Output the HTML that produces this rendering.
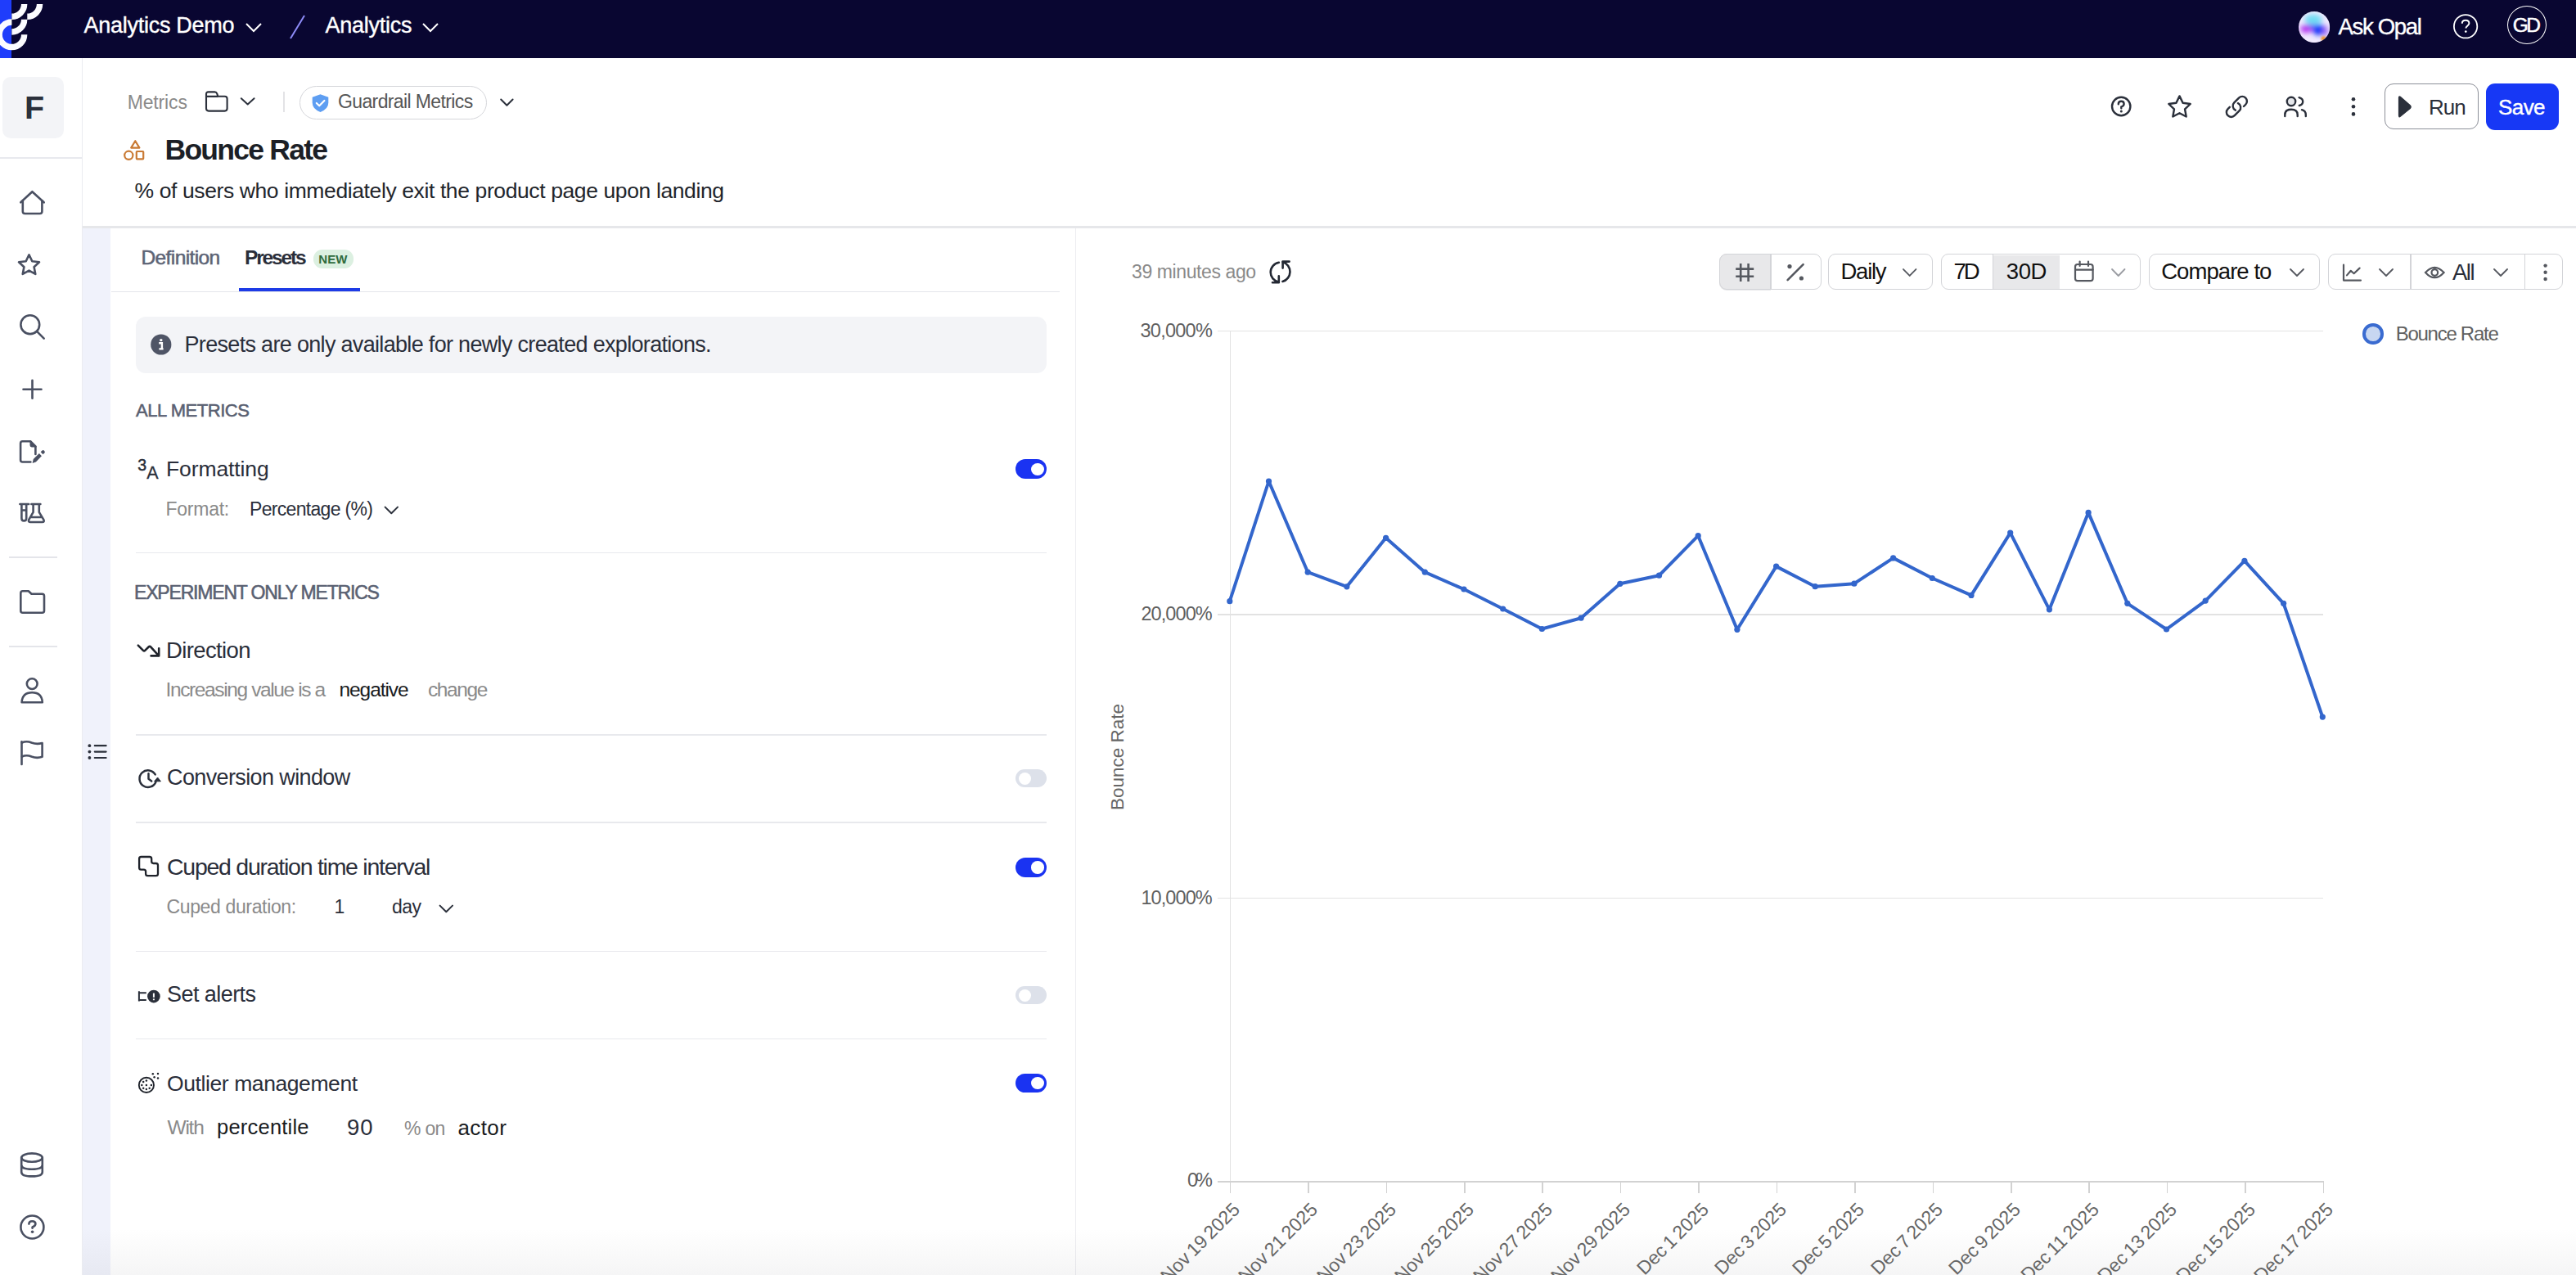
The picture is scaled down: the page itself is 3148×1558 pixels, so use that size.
<!DOCTYPE html>
<html><head><meta charset="utf-8"><style>
html,body{margin:0;padding:0;background:#fff;}
body{width:3148px;height:1558px;position:relative;overflow:hidden;font-family:"Liberation Sans",sans-serif;}
.a{position:absolute;}
.t{position:absolute;line-height:1;white-space:nowrap;}
svg{overflow:visible;}
</style></head><body>
<div class="a" style="left:0.0px;top:0.0px;width:3148.0px;height:71.0px;background:#090631;"></div>
<div class="a" style="left:0.0px;top:0.0px;width:14.4px;height:71.0px;background:#1f3dfb;"></div>
<svg class="a" style="left:0.0px;top:0.0px;clip-path:inset(0 0 0 0);" width="60" height="71" viewBox="0 0 60 71"><g fill="none" stroke="#fbfbff" stroke-width="7.4">
<path d="M14.4 27.05 A15.25 15.25 0 1 0 29.65 42.3"/>
<path d="M14.4 38.95 A15.25 15.25 0 0 0 29.65 23.7"/>
<path d="M14.4 20.25 A15.25 15.25 0 0 0 29.65 5"/>
<path d="M33.3 20.25 A15.25 15.25 0 0 0 48.55 5"/>
</g></svg>
<div class="t" style="left:102.5px;top:17.9px;font-size:27.0px;color:#ffffff;font-weight:400;letter-spacing:-0.27px;-webkit-text-stroke:0.4px #fff;">Analytics Demo</div>
<svg class="a" style="left:300.0px;top:28.0px;" width="20" height="11" viewBox="0 0 20 11"><path d="M1 1 L10 10 L19 1" fill="none" stroke="#fff" stroke-width="2"/></svg>
<svg class="a" style="left:354.0px;top:18.0px;" width="19" height="30" viewBox="0 0 19 30"><path d="M18 1 L1 29" fill="none" stroke="#8e8cf8" stroke-width="2"/></svg>
<div class="t" style="left:397.5px;top:17.9px;font-size:27.0px;color:#ffffff;font-weight:400;letter-spacing:-0.25px;-webkit-text-stroke:0.4px #fff;">Analytics</div>
<svg class="a" style="left:516.0px;top:28.0px;" width="20" height="11" viewBox="0 0 20 11"><path d="M1 1 L10 10 L19 1" fill="none" stroke="#fff" stroke-width="2"/></svg>
<svg class="a" style="left:2808.8px;top:13.9px" width="38.2" height="38.2" viewBox="0 0 38.2 38.2"><defs><clipPath id="orbc"><circle cx="19.1" cy="19.1" r="19.1"/></clipPath><filter id="orbb" x="-50%" y="-50%" width="200%" height="200%"><feGaussianBlur stdDeviation="3.2"/></filter><filter id="orbs" x="-100%" y="-100%" width="300%" height="300%"><feGaussianBlur stdDeviation="1.3"/></filter></defs><g clip-path="url(#orbc)"><rect width="38.2" height="38.2" fill="#f1eaff"/><g filter="url(#orbb)"><ellipse cx="18" cy="10" rx="11" ry="6.5" fill="#6fdcf3"/><ellipse cx="14" cy="20" rx="12" ry="4" fill="#7a5cf5"/><ellipse cx="9" cy="21.5" rx="6.5" ry="5" fill="#b52ff0"/><ellipse cx="25" cy="22.5" rx="8.5" ry="6.5" fill="#1238fa"/><ellipse cx="33" cy="24" rx="3" ry="7" fill="#a46cf6"/></g><circle cx="30.5" cy="33.2" r="3" fill="#ee962f" filter="url(#orbs)"/></g></svg>
<div class="t" style="left:2857.4px;top:19.3px;font-size:27.5px;color:#ffffff;font-weight:400;letter-spacing:-1.29px;-webkit-text-stroke:0.4px #fff;">Ask Opal</div>
<svg class="a" style="left:2997.8px;top:17.4px;" width="30.2" height="30.5" viewBox="0 0 30.2 30.5"><circle cx="15.1" cy="15.25" r="14.2" fill="none" stroke="#fff" stroke-width="1.8"/><path d="M10.8 11.8 C10.8 9 12.8 7.8 15.1 7.8 C17.5 7.8 19.4 9.2 19.4 11.6 C19.4 14.4 15.4 14.6 15.4 17.6" fill="none" stroke="#fff" stroke-width="2"/><circle cx="15.3" cy="21.6" r="1.3" fill="#fff"/></svg>
<div class="a" style="left:3063.8px;top:6.7px;width:46.5px;height:45.5px;border:1.5px solid #fff;border-radius:50%;"></div>
<div class="t" style="left:3070.8px;top:18.6px;font-size:24.5px;color:#ffffff;font-weight:400;letter-spacing:-2.50px;-webkit-text-stroke:0.55px currentColor;">GD</div>
<div class="a" style="left:99.5px;top:71.0px;width:1.5px;height:1487.0px;background:#ebecf0;"></div>
<div class="a" style="left:3.0px;top:94.0px;width:75.0px;height:75.0px;background:#f3f4f7;border-radius:10px;"></div>
<div class="t" style="left:30.0px;top:112.2px;font-size:39.5px;color:#2b303b;font-weight:700;letter-spacing:-2.40px;">F</div>
<div class="a" style="left:0.0px;top:192.0px;width:99.5px;height:2.0px;background:#e8e9ee;"></div>
<svg class="a" style="left:0;top:0" width="100" height="1558"><g fill="none" stroke="#4a5062" stroke-width="2.6" stroke-linecap="round" stroke-linejoin="round">
<path d="M25.3 247.3 L39.4 234.2 L53.7 247.3"/>
<path d="M27.8 245.5 V258.2 Q27.8 261 30.6 261 H48.6 Q51.4 261 51.4 258.2 V245.5"/>
<path d="M35.5 311.3 L39.3 319.2 L48 320.3 L41.6 326.2 L43.3 334.9 L35.5 330.6 L27.7 334.9 L29.4 326.2 L23 320.3 L31.7 319.2 Z"/>
<circle cx="36.8" cy="396.7" r="11.4"/><path d="M45.3 405.2 L53.7 413.6"/>
<path d="M39.5 464.8 V486.8 M28.5 475.8 H50.5"/>
<path d="M37.4 564.5 H27.5 Q25.1 564.5 25.1 562 V541.8 Q25.1 539.3 27.5 539.3 H37 L43.4 545.6 V555"/>
<path d="M24.4 616 H35.2 M26.4 616.2 V633.2 Q26.4 636.4 29.3 636.4 Q32.2 636.4 32.2 633.2 V616.2 M26.6 623.5 H32"/>
<path d="M38.4 616 H49.4 M40.6 616.2 V625.8 L35.2 635.2 Q34.2 638 37.2 638 H51.6 Q54.6 638 53.4 635.2 L47.8 625.8 V616.2 M37.4 632 H50.8"/>
<path d="M25.3 724.8 Q25.3 722.3 27.8 722.3 H34.8 L38.5 725.8 H51.5 Q54 725.8 54 728.3 V746.2 Q54 748.7 51.5 748.7 H27.8 Q25.3 748.7 25.3 746.2 Z"/>
<circle cx="39.2" cy="835.6" r="6.4"/><path d="M26.6 858.2 Q27.2 846.3 39.2 846.3 Q51.2 846.3 51.8 858.2 Z"/>
<path d="M26.5 906.2 V934"/><path d="M26.8 907.5 Q32.5 905 38.5 907.5 Q45 910 51.6 908 V924.8 Q45 927 38.5 924.5 Q32.5 922 26.8 924.5"/>
<ellipse cx="39" cy="1414.6" rx="12.8" ry="5.2"/><path d="M26.2 1414.6 V1432.2 Q26.2 1437.4 39 1437.4 Q51.8 1437.4 51.8 1432.2 V1414.6 M26.2 1423.6 Q26.2 1428.8 39 1428.8 Q51.8 1428.8 51.8 1423.6"/>
<circle cx="39.4" cy="1499.5" r="14"/><path d="M35.4 1495.6 Q35.4 1492.2 39.4 1492.2 Q43.4 1492.2 43.4 1495.4 Q43.4 1497.8 39.6 1499.4 V1500.8"/>
</g></svg>
<svg class="a" style="left:0;top:0" width="100" height="1558"><g fill="#4a5062"><path d="M36.5 538.4 H38 L44.6 545 V546.4 H38.8 Q36.5 546.4 36.5 544 Z"/><path d="M39.6 566 L40.8 561 L47.9 554.1 L50.9 557.2 L43.9 564.4 Z"/><path d="M49.6 552.3 L51.6 550.4 Q52.6 549.4 53.8 550.6 L54.4 551.2 Q55.4 552.4 54.4 553.4 L52.5 555.3 Z"/><circle cx="39.6" cy="1505.2" r="1.8"/></g></svg>
<div class="a" style="left:11.0px;top:680.0px;width:59.0px;height:2.0px;background:#e4e5ea;"></div>
<div class="a" style="left:11.0px;top:789.0px;width:59.0px;height:2.0px;background:#e4e5ea;"></div>
<div class="t" style="left:155.7px;top:114.3px;font-size:23.0px;color:#8a8a8a;font-weight:400;letter-spacing:-0.15px;">Metrics</div>
<svg class="a" style="left:249.0px;top:110.0px;" width="32" height="28" viewBox="0 0 32 28"><path d="M3 22.6 V5 Q3 2.4 5.6 2.4 H13.4 Q15.4 2.4 16.2 4.4 L17.4 7.8 H25.6 Q28.6 7.8 28.6 10.8 V22.6 Q28.6 25.6 25.6 25.6 H6 Q3 25.6 3 22.6 Z M3 7.9 H17.4" fill="none" stroke="#2b303b" stroke-width="2.1" stroke-linejoin="round"/></svg>
<svg class="a" style="left:294.0px;top:118.0px;" width="18" height="12" viewBox="0 0 18 12"><path d="M0.8 2.2 L8.7 9.4 L16.6 2.2" fill="none" stroke="#2b303b" stroke-width="2" stroke-linecap="round" stroke-linejoin="round"/></svg>
<div class="a" style="left:346.3px;top:112.0px;width:1.5px;height:25.0px;background:#e3e3e6;"></div>
<div class="a" style="left:366px;top:104.5px;width:226.5px;height:39px;border:1.5px solid #d5d6da;border-radius:21px;"></div>
<svg class="a" style="left:380.0px;top:114.0px;" width="24" height="24" viewBox="0 0 24 24"><path d="M11.5 1.3 L21.3 4.8 V11.6 Q21.3 19.3 11.5 23 Q1.7 19.3 1.7 11.6 V4.8 Z" fill="#5e9ef2"/><path d="M6.8 12 L10.2 15.3 L16.4 9" fill="none" stroke="#fff" stroke-width="2.2" stroke-linecap="round" stroke-linejoin="round"/></svg>
<div class="t" style="left:413.0px;top:113.1px;font-size:23.0px;color:#565656;font-weight:400;letter-spacing:-0.62px;">Guardrail Metrics</div>
<svg class="a" style="left:611.0px;top:120.0px;" width="18" height="12" viewBox="0 0 18 12"><path d="M1.2 1.5 L8.4 8.8 L15.6 1.5" fill="none" stroke="#2b303b" stroke-width="2" stroke-linecap="round" stroke-linejoin="round"/></svg>
<svg class="a" style="left:150.0px;top:170.0px;" width="28" height="28" viewBox="0 0 28 28"><g fill="none" stroke="#c97a34" stroke-width="2.2" stroke-linejoin="round"><path d="M15.3 2.2 L20.4 10.6 H10.2 Z"/><circle cx="7.3" cy="19.8" r="5.1"/><rect x="16.8" y="15" width="8.4" height="9.4" rx="0.8"/></g></svg>
<div class="t" style="left:201.5px;top:165.7px;font-size:35.5px;color:#1c1f26;font-weight:700;letter-spacing:-1.75px;">Bounce Rate</div>
<div class="t" style="left:164.5px;top:220.2px;font-size:26.5px;color:#22252b;font-weight:400;letter-spacing:-0.39px;">% of users who immediately exit the product page upon landing</div>
<svg class="a" style="left:2578.0px;top:116.0px;" width="28" height="28" viewBox="0 0 28 28"><g fill="none" stroke="#2b303b" stroke-width="2.4" stroke-linecap="round"><circle cx="14.2" cy="14" r="11.2"/><path d="M10.8 11.2 Q10.8 7.8 14.2 7.8 Q17.6 7.8 17.6 10.9 Q17.6 13.2 14.3 14.6 V16.2"/></g><circle cx="14.3" cy="20" r="1.5" fill="#2b303b"/></svg>
<svg class="a" style="left:2647.0px;top:114.0px;" width="32" height="32" viewBox="0 0 32 32"><path d="M16.50 3.40 L20.56 11.72 L29.72 13.00 L23.06 19.43 L24.67 28.55 L16.50 24.20 L8.33 28.55 L9.94 19.43 L3.28 13.00 L12.44 11.72 Z" fill="none" stroke="#2b303b" stroke-width="2.4" stroke-linejoin="round"/></svg>
<svg class="a" style="left:2718.2px;top:114.5px;" width="30.8" height="30.8" viewBox="0 0 24 24"><path d="M13.19 8.688a4.5 4.5 0 0 1 1.242 7.244l-4.5 4.5a4.5 4.5 0 0 1-6.364-6.364l1.757-1.757m13.35-.622 1.757-1.757a4.5 4.5 0 0 0-6.364-6.364l-4.5 4.5a4.5 4.5 0 0 0 1.242 7.244" fill="none" stroke="#2b303b" stroke-width="1.9" stroke-linecap="round" stroke-linejoin="round"/></svg>
<svg class="a" style="left:2789.0px;top:116.0px;" width="32" height="30" viewBox="0 0 32 30"><g fill="none" stroke="#2b303b" stroke-width="2.4" stroke-linecap="round" stroke-linejoin="round"><circle cx="11" cy="8" r="5.2" fill="#e4e6ea"/><path d="M3.3 26 V24.2 Q3.3 17.8 11 17.8 Q18.7 17.8 18.7 24.2 V26"/><path d="M20.6 3.2 Q25.2 4.6 25.2 8.2 Q25.2 11.8 20.8 13"/><path d="M24 18.2 Q28.8 19.4 28.8 24.4 V26"/></g></svg>
<svg class="a" style="left:2870px;top:116px" width="12" height="30"><g fill="#2b303b"><circle cx="6" cy="5.2" r="2.3"/><circle cx="6" cy="14.3" r="2.3"/><circle cx="6" cy="23.4" r="2.3"/></g></svg>
<div class="a" style="left:2914.4px;top:102px;width:112.6px;height:54px;border:1.5px solid #8d9099;border-radius:11px;"></div>
<svg class="a" style="left:2929.0px;top:115.0px;" width="20" height="30" viewBox="0 0 20 30"><path d="M4.2 3.4 Q2.6 2 2.6 4.6 V26 Q2.6 28.6 4.2 27.2 L16.2 17.4 Q18 15.6 16.2 13.8 Z" fill="#2b303b" stroke="#2b303b" stroke-width="1.4" stroke-linejoin="round"/></svg>
<div class="t" style="left:2968.0px;top:117.7px;font-size:26.0px;color:#2b303b;font-weight:400;letter-spacing:-1.00px;">Run</div>
<div class="a" style="left:3037.9px;top:101.7px;width:89px;height:57.3px;background:#1738f5;border-radius:11px;"></div>
<div class="t" style="left:3053.0px;top:117.7px;font-size:26.0px;color:#ffffff;font-weight:400;letter-spacing:-0.57px;-webkit-text-stroke:0.4px #fff;">Save</div>
<div class="a" style="left:101.0px;top:276.0px;width:3047.0px;height:2.6px;background:#e6e7ea;"></div>
<div class="a" style="left:101.0px;top:278.6px;width:34.0px;height:1279.4px;background:#f0f2fb;"></div>
<div class="a" style="left:1313.6px;top:278.6px;width:1.4px;height:1279.4px;background:#ececf0;"></div>
<svg class="a" style="left:106.0px;top:908.0px;" width="27" height="22" viewBox="0 0 27 22"><g fill="#2b303b"><circle cx="3.4" cy="3.2" r="1.9"/><circle cx="3.4" cy="10.6" r="1.9"/><circle cx="3.4" cy="18" r="1.9"/></g><g stroke="#2b303b" stroke-width="2.2" stroke-linecap="round"><path d="M9.8 3.2 H23.6 M9.8 10.6 H23.6 M9.8 18 H23.6"/></g></svg>
<div class="t" style="left:172.5px;top:303.3px;font-size:24.5px;color:#5d6475;font-weight:400;letter-spacing:-0.61px;-webkit-text-stroke:0.55px currentColor;">Definition</div>
<div class="t" style="left:299.0px;top:303.3px;font-size:24.5px;color:#2a2e3a;font-weight:700;letter-spacing:-2.17px;">Presets</div>
<div class="a" style="left:382.5px;top:305.0px;width:49.5px;height:22.5px;background:#dcf0e1;border-radius:11px;"></div>
<div class="t" style="left:389.3px;top:309.1px;font-size:15px;color:#2f6b3d;font-weight:700;letter-spacing:0.10px;">NEW</div>
<div class="a" style="left:292.0px;top:352.0px;width:148.0px;height:5.0px;background:#1d3be6;"></div>
<div class="a" style="left:136.0px;top:355.6px;width:1159.0px;height:1.4px;background:#e4e6eb;"></div>
<div class="a" style="left:166.0px;top:387.0px;width:1113.0px;height:68.6px;background:#f3f4f7;border-radius:12px;"></div>
<svg class="a" style="left:184.0px;top:407.5px;" width="26" height="26" viewBox="0 0 26 26"><circle cx="12.8" cy="13" r="12.6" fill="#4f5566"/><circle cx="12.8" cy="7.6" r="1.7" fill="#fff"/><path d="M10.2 11.2 H13.9 V18.2 M10.4 18.4 H15.6" fill="none" stroke="#fff" stroke-width="2.4"/></svg>
<div class="t" style="left:225.5px;top:407.9px;font-size:27.0px;color:#2a2e3a;font-weight:400;letter-spacing:-0.68px;">Presets are only available for newly created explorations.</div>
<div class="t" style="left:166.0px;top:491.4px;font-size:22px;color:#5a6172;font-weight:400;letter-spacing:-0.45px;-webkit-text-stroke:0.55px currentColor;">ALL METRICS</div>
<svg class="a" style="left:166px;top:556px" width="34" height="34"><text x="2.2" y="19" font-family="Liberation Sans" font-size="19.5" fill="#2b303b" stroke="#2b303b" stroke-width="0.5">3</text><text x="13.2" y="29" font-family="Liberation Sans" font-size="21.5" fill="#2b303b" stroke="#2b303b" stroke-width="0.3">A</text></svg>
<div class="t" style="left:203.0px;top:560.1px;font-size:26.5px;color:#2a2e3a;font-weight:400;letter-spacing:-0.11px;">Formatting</div>
<div class="t" style="left:202.5px;top:610.5px;font-size:23.0px;color:#8a8a8a;font-weight:400;letter-spacing:-0.25px;">Format:</div>
<div class="t" style="left:305.0px;top:610.5px;font-size:23.0px;color:#2a2e3a;font-weight:400;letter-spacing:-0.69px;">Percentage (%)</div>
<svg class="a" style="left:469.0px;top:618.0px;" width="20" height="12" viewBox="0 0 20 12"><path d="M1.6 1.6 L9.3 9.2 L17 1.6" fill="none" stroke="#2b303b" stroke-width="2" stroke-linecap="round" stroke-linejoin="round"/></svg>
<div class="a" style="left:1241px;top:561.3px;width:38px;height:23.6px;border-radius:12px;background:#1a33f2;"></div>
<div class="a" style="left:1259.6px;top:565.5px;width:16px;height:15.2px;border-radius:50%;background:#fff;"></div>
<div class="a" style="left:166.0px;top:674.8px;width:1113.0px;height:1.5px;background:#e8e9ed;"></div>
<div class="t" style="left:164.0px;top:712.5px;font-size:23px;color:#5a6172;font-weight:400;letter-spacing:-1.18px;-webkit-text-stroke:0.55px currentColor;">EXPERIMENT ONLY METRICS</div>
<svg class="a" style="left:166.0px;top:784.0px;" width="32" height="22" viewBox="0 0 32 22"><g fill="none" stroke="#1f232b" stroke-width="2.6" stroke-linecap="round" stroke-linejoin="round"><path d="M2.8 4.7 L9 10.9 Q10.1 12 11.2 10.9 L15.9 6.3 Q17 5.2 18.1 6.3 L27.6 16.8"/><path d="M28.2 8.2 V17.4 H18.6"/></g></svg>
<div class="t" style="left:203.0px;top:780.5px;font-size:27.5px;color:#2a2e3a;font-weight:400;letter-spacing:-0.62px;">Direction</div>
<div class="t" style="left:202.5px;top:831.3px;font-size:24.5px;color:#8a8a8a;font-weight:400;letter-spacing:-1.38px;">Increasing value is a</div>
<div class="t" style="left:414.5px;top:831.3px;font-size:24.5px;color:#1a1c22;font-weight:400;letter-spacing:-1.07px;">negative</div>
<div class="t" style="left:523.0px;top:831.3px;font-size:24.5px;color:#8a8a8a;font-weight:400;letter-spacing:-1.40px;">change</div>
<div class="a" style="left:166.0px;top:897.3px;width:1113.0px;height:1.5px;background:#e8e9ed;"></div>
<svg class="a" style="left:166.0px;top:937.0px;" width="32" height="30" viewBox="0 0 32 30"><g fill="none" stroke="#2b303b" stroke-width="2.5" stroke-linecap="round" stroke-linejoin="round"><path d="M23.72 9.45 A10.3 10.3 0 1 0 24.5 18.2"/><path d="M15.5 8.2 V14.8 L19.2 17.6"/></g><path d="M22.6 17.8 L26.6 13 L30.4 17.8 Z" fill="#2b303b" stroke="#2b303b" stroke-width="1" stroke-linejoin="round"/></svg>
<div class="t" style="left:204.0px;top:937.1px;font-size:27.0px;color:#2a2e3a;font-weight:400;letter-spacing:-0.62px;">Conversion window</div>
<div class="a" style="left:1241px;top:940.4px;width:38px;height:21.6px;border-radius:11px;background:#dde1ea;"></div>
<div class="a" style="left:1245px;top:943.7px;width:15px;height:15px;border-radius:50%;background:#fff;"></div>
<div class="a" style="left:166.0px;top:1004.3px;width:1113.0px;height:1.5px;background:#e8e9ed;"></div>
<svg class="a" style="left:166.0px;top:1043.0px;" width="32" height="32" viewBox="0 0 32 32"><path d="M6.5 4 H16.8 Q19.2 4 19.2 6.4 V9.6 Q19.2 12 21.6 12 H24.6 Q27 12 27 14.4 V24.7 Q27 27.1 24.6 27.1 H14.5 Q12.1 27.1 12.1 24.7 V22 Q12.1 19.6 9.7 19.6 H6.5 Q4.1 19.6 4.1 17.2 V6.4 Q4.1 4 6.5 4 Z" fill="none" stroke="#1f232b" stroke-width="2.3" stroke-linejoin="round"/></svg>
<div class="t" style="left:204.0px;top:1045.4px;font-size:28.5px;color:#2a2e3a;font-weight:400;letter-spacing:-1.26px;">Cuped duration time interval</div>
<div class="a" style="left:1241px;top:1048.2px;width:38px;height:23.6px;border-radius:12px;background:#1a33f2;"></div>
<div class="a" style="left:1259.6px;top:1052.4px;width:16px;height:15.2px;border-radius:50%;background:#fff;"></div>
<div class="t" style="left:203.5px;top:1096.5px;font-size:23.0px;color:#8a8a8a;font-weight:400;letter-spacing:-0.36px;">Cuped duration:</div>
<div class="t" style="left:408.5px;top:1096.5px;font-size:23px;color:#2a2e3a;font-weight:400;">1</div>
<div class="t" style="left:479.0px;top:1096.5px;font-size:23px;color:#2a2e3a;font-weight:400;letter-spacing:-0.50px;">day</div>
<svg class="a" style="left:536.0px;top:1105.0px;" width="20" height="12" viewBox="0 0 20 12"><path d="M1.6 1.6 L9.3 9.2 L17 1.6" fill="none" stroke="#2b303b" stroke-width="2" stroke-linecap="round" stroke-linejoin="round"/></svg>
<div class="a" style="left:166.0px;top:1161.8px;width:1113.0px;height:1.5px;background:#e8e9ed;"></div>
<svg class="a" style="left:166.0px;top:1206.0px;" width="32" height="24" viewBox="0 0 32 24"><path d="M12.8 7.2 H3.9 V16 H12.8 M3.9 5.3 V17.6" fill="none" stroke="#2b303b" stroke-width="2"/><circle cx="21.9" cy="11.6" r="7.8" fill="#2b303b"/><path d="M21.9 7.6 V12.8" stroke="#fff" stroke-width="2"/><rect x="20.9" y="14.4" width="2" height="1.8" fill="#fff"/></svg>
<div class="t" style="left:204.0px;top:1202.1px;font-size:27.0px;color:#2a2e3a;font-weight:400;letter-spacing:-0.56px;">Set alerts</div>
<div class="a" style="left:1241px;top:1205.4px;width:38px;height:21.6px;border-radius:11px;background:#dde1ea;"></div>
<div class="a" style="left:1245px;top:1208.7px;width:15px;height:15px;border-radius:50%;background:#fff;"></div>
<div class="a" style="left:166.0px;top:1268.8px;width:1113.0px;height:1.5px;background:#e8e9ed;"></div>
<svg class="a" style="left:166.0px;top:1308.0px;" width="32" height="32" viewBox="0 0 32 32"><circle cx="12.9" cy="17.9" r="9.1" fill="none" stroke="#1f232b" stroke-width="1.9"/><g fill="#1f232b"><circle cx="12.9" cy="17.9" r="1.25"/><circle cx="12.9" cy="12.4" r="1.25"/><circle cx="9.2" cy="14" r="1.25"/><circle cx="7.3" cy="18" r="1.25"/><circle cx="18.9" cy="18" r="1.25"/><circle cx="9.2" cy="21.8" r="1.25"/><circle cx="12.9" cy="23" r="1.25"/><circle cx="16.7" cy="21.8" r="1.25"/><circle cx="20.8" cy="4.2" r="1.25"/><circle cx="27" cy="4.1" r="1.25"/><circle cx="22.6" cy="8.2" r="1.25"/><circle cx="27" cy="9.5" r="1.25"/></g></svg>
<div class="t" style="left:204.0px;top:1310.6px;font-size:26.5px;color:#2a2e3a;font-weight:400;letter-spacing:-0.41px;">Outlier management</div>
<div class="a" style="left:1241px;top:1311.8px;width:38px;height:23.6px;border-radius:12px;background:#1a33f2;"></div>
<div class="a" style="left:1259.6px;top:1316.0px;width:16px;height:15.2px;border-radius:50%;background:#fff;"></div>
<div class="t" style="left:204.5px;top:1366.3px;font-size:24.5px;color:#8a8a8a;font-weight:400;letter-spacing:-1.23px;">With</div>
<div class="t" style="left:265.0px;top:1365.4px;font-size:25.5px;color:#1a1c22;font-weight:400;letter-spacing:0.22px;">percentile</div>
<div class="t" style="left:424.0px;top:1363.7px;font-size:27.5px;color:#2a2e3a;font-weight:400;letter-spacing:1.00px;">90</div>
<div class="t" style="left:494.0px;top:1367.5px;font-size:23px;color:#8a8a8a;font-weight:400;letter-spacing:-0.67px;">% on</div>
<div class="t" style="left:559.5px;top:1365.0px;font-size:26px;color:#1a1c22;font-weight:400;letter-spacing:0.38px;">actor</div>
<div class="t" style="left:1383.0px;top:321.3px;font-size:23.0px;color:#8a8a8a;font-weight:400;letter-spacing:-0.40px;">39 minutes ago</div>
<svg class="a" style="left:1545.0px;top:312.0px;" width="40" height="40" viewBox="0 0 40 40"><g fill="none" stroke="#232833" stroke-width="2.6" stroke-linecap="round" stroke-linejoin="round"><path d="M17.9 8.8 A12.07 12.07 0 0 0 17.6 32.6"/><path d="M10 33.3 H17.8 V25.4"/><path d="M22.7 8.2 A12.4 12.4 0 0 1 22.4 32"/><path d="M30.6 7.6 H22.6 V15.6"/></g></svg>
<div class="a" style="left:2101.3px;top:310px;width:62.5px;height:44.60000000000002px;background:#e8e8ea;border-radius:9px 0 0 9px;"></div>
<div class="a" style="left:2101.3px;top:310.0px;width:122.5px;height:41.6px;border:1.5px solid #d3d4d8;border-radius:9px;"></div>
<div class="a" style="left:2163.0px;top:311.0px;width:1.5px;height:42.6px;background:#d3d4d8;"></div>
<svg class="a" style="left:2119.0px;top:320.0px;" width="26" height="26" viewBox="0 0 26 26"><g stroke="#55585f" stroke-width="2.6" stroke-linecap="butt"><path d="M8.2 2 L8.2 24 M17.6 2 L17.6 24 M2.2 8.6 H24.2 M2.2 17.8 H24.2"/></g></svg>
<svg class="a" style="left:2180.0px;top:320.0px;" width="30" height="26" viewBox="0 0 30 26"><path d="M23.6 3.2 L4.6 22.2" stroke="#55585f" stroke-width="2.6" stroke-linecap="round"/><circle cx="7" cy="5.6" r="2.6" fill="#55585f"/><circle cx="21.4" cy="20" r="2.6" fill="#55585f"/></svg>
<div class="a" style="left:2234.4px;top:310.0px;width:125.4px;height:41.6px;border:1.5px solid #d3d4d8;border-radius:9px;"></div>
<div class="t" style="left:2249.5px;top:318.3px;font-size:27.5px;color:#111111;font-weight:400;letter-spacing:-1.25px;">Daily</div>
<svg class="a" style="left:2325.4px;top:328.0px;" width="17.4" height="10" viewBox="0 0 17.4 10"><path d="M1 1 L8.7 9 L16.4 1" fill="none" stroke="#55585f" stroke-width="1.8" stroke-linecap="round" stroke-linejoin="round"/></svg>
<div class="a" style="left:2435.5px;top:311.5px;width:81px;height:41.60000000000002px;background:#e8e8ea;"></div>
<div class="a" style="left:2372.3px;top:310.0px;width:241.3px;height:41.6px;border:1.5px solid #d3d4d8;border-radius:9px;"></div>
<div class="a" style="left:2434.8px;top:311.0px;width:1.5px;height:42.6px;background:#d3d4d8;"></div>
<div class="t" style="left:2387.4px;top:318.3px;font-size:27.5px;color:#111111;font-weight:400;letter-spacing:-3.00px;">7D</div>
<div class="t" style="left:2451.7px;top:318.3px;font-size:27.5px;color:#111111;font-weight:400;letter-spacing:-0.35px;">30D</div>
<svg class="a" style="left:2533.0px;top:317.0px;" width="28" height="30" viewBox="0 0 28 30"><g fill="none" stroke="#55585f" stroke-width="2.2" stroke-linecap="round"><rect x="3" y="6" width="21.6" height="20.2" rx="3"/><path d="M3 12.6 H24.6 M8.6 2.6 V8 M19 2.6 V8"/></g></svg>
<svg class="a" style="left:2579.5px;top:328.0px;" width="17.5" height="10" viewBox="0 0 17.5 10"><path d="M1 1 L8.75 9 L16.5 1" fill="none" stroke="#9a9ca2" stroke-width="1.8" stroke-linecap="round" stroke-linejoin="round"/></svg>
<div class="a" style="left:2626.2px;top:310.0px;width:206.5px;height:41.6px;border:1.5px solid #d3d4d8;border-radius:9px;"></div>
<div class="t" style="left:2641.2px;top:317.5px;font-size:27.5px;color:#111111;font-weight:400;letter-spacing:-0.94px;">Compare to</div>
<svg class="a" style="left:2797.5px;top:328.0px;" width="18" height="10" viewBox="0 0 18 10"><path d="M1 1 L9.0 9 L17 1" fill="none" stroke="#55585f" stroke-width="1.8" stroke-linecap="round" stroke-linejoin="round"/></svg>
<div class="a" style="left:2844.9px;top:310.0px;width:285.5px;height:41.6px;border:1.5px solid #d3d4d8;border-radius:9px;"></div>
<div class="a" style="left:2945.1px;top:311.0px;width:1.5px;height:42.6px;background:#d3d4d8;"></div>
<div class="a" style="left:3084.7px;top:311.0px;width:1.5px;height:42.6px;background:#d3d4d8;"></div>
<svg class="a" style="left:2861.0px;top:321.0px;" width="26" height="25" viewBox="0 0 26 25"><g fill="none" stroke="#55585f" stroke-width="2.2" stroke-linecap="round" stroke-linejoin="round"><path d="M3 2.6 V21.6 H24"/><path d="M7 15.4 L11.8 9.8 L15.6 13.2 L22.6 6.6"/></g></svg>
<svg class="a" style="left:2907.0px;top:328.0px;" width="18" height="10" viewBox="0 0 18 10"><path d="M1 1 L9.0 9 L17 1" fill="none" stroke="#55585f" stroke-width="1.8" stroke-linecap="round" stroke-linejoin="round"/></svg>
<svg class="a" style="left:2962.0px;top:322.0px;" width="27" height="22" viewBox="0 0 27 22"><g fill="none" stroke="#55585f" stroke-width="2.2"><path d="M2 11 Q13.2 -1.4 24.6 11 Q13.2 23.4 2 11 Z"/><circle cx="13.3" cy="11" r="3.8"/></g></svg>
<div class="t" style="left:2997.0px;top:318.7px;font-size:27.5px;color:#2a2e3a;font-weight:400;letter-spacing:-1.50px;">All</div>
<svg class="a" style="left:3047.0px;top:328.0px;" width="18" height="10" viewBox="0 0 18 10"><path d="M1 1 L9.0 9 L17 1" fill="none" stroke="#55585f" stroke-width="1.8" stroke-linecap="round" stroke-linejoin="round"/></svg>
<svg class="a" style="left:3104px;top:320px" width="14" height="26"><g fill="#55585f"><circle cx="6.6" cy="4.6" r="2.2"/><circle cx="6.6" cy="12.8" r="2.2"/><circle cx="6.6" cy="21" r="2.2"/></g></svg>
<div class="a" style="left:2887.4px;top:395.4px;width:17.6px;height:17.6px;border:4px solid #3a6bd0;border-radius:50%;background:#c8d7f1;"></div>
<div class="t" style="left:2927.7px;top:395.7px;font-size:24.0px;color:#606060;font-weight:400;letter-spacing:-1.27px;">Bounce Rate</div>
<div class="a" style="left:1488.0px;top:403.8px;width:1351.0px;height:1.5px;background:#e2e2e2;"></div>
<div class="a" style="left:1488.0px;top:750.1px;width:1351.0px;height:1.5px;background:#e2e2e2;"></div>
<div class="a" style="left:1488.0px;top:1096.5px;width:1351.0px;height:1.5px;background:#e2e2e2;"></div>
<div class="a" style="left:1502.8px;top:405.0px;width:1.5px;height:1039.0px;background:#e2e2e2;"></div>
<div class="a" style="left:1488.0px;top:1443.2px;width:1351.5px;height:2.0px;background:#d2d2d2;"></div>
<div class="t" style="left:1393.5px;top:392.6px;font-size:23.5px;color:#5f5f5f;font-weight:400;letter-spacing:-0.75px;">30,000%</div>
<div class="t" style="left:1394.4px;top:739.1px;font-size:23.5px;color:#5f5f5f;font-weight:400;letter-spacing:-0.90px;">20,000%</div>
<div class="t" style="left:1394.4px;top:1085.5px;font-size:23.5px;color:#5f5f5f;font-weight:400;letter-spacing:-0.90px;">10,000%</div>
<div class="t" style="left:1451.0px;top:1431.0px;font-size:23.5px;color:#5f5f5f;font-weight:400;letter-spacing:-3.00px;">0%</div>
<div class="a" style="left:1502.8px;top:1444.5px;width:1.5px;height:13.7px;background:#d2d2d2;"></div>
<div class="a" style="left:1598.2px;top:1444.5px;width:1.5px;height:13.7px;background:#d2d2d2;"></div>
<div class="a" style="left:1693.6px;top:1444.5px;width:1.5px;height:13.7px;background:#d2d2d2;"></div>
<div class="a" style="left:1789.0px;top:1444.5px;width:1.5px;height:13.7px;background:#d2d2d2;"></div>
<div class="a" style="left:1884.4px;top:1444.5px;width:1.5px;height:13.7px;background:#d2d2d2;"></div>
<div class="a" style="left:1979.9px;top:1444.5px;width:1.5px;height:13.7px;background:#d2d2d2;"></div>
<div class="a" style="left:2075.3px;top:1444.5px;width:1.5px;height:13.7px;background:#d2d2d2;"></div>
<div class="a" style="left:2170.7px;top:1444.5px;width:1.5px;height:13.7px;background:#d2d2d2;"></div>
<div class="a" style="left:2266.1px;top:1444.5px;width:1.5px;height:13.7px;background:#d2d2d2;"></div>
<div class="a" style="left:2361.5px;top:1444.5px;width:1.5px;height:13.7px;background:#d2d2d2;"></div>
<div class="a" style="left:2457.0px;top:1444.5px;width:1.5px;height:13.7px;background:#d2d2d2;"></div>
<div class="a" style="left:2552.4px;top:1444.5px;width:1.5px;height:13.7px;background:#d2d2d2;"></div>
<div class="a" style="left:2647.8px;top:1444.5px;width:1.5px;height:13.7px;background:#d2d2d2;"></div>
<div class="a" style="left:2743.2px;top:1444.5px;width:1.5px;height:13.7px;background:#d2d2d2;"></div>
<div class="a" style="left:2838.7px;top:1444.5px;width:1.5px;height:13.7px;background:#d2d2d2;"></div>
<div class="t" style="left:1366px;top:924.7px;font-size:22.5px;color:#666;transform:translate(-50%,-50%) rotate(-90deg);transform-origin:center;line-height:1;">Bounce Rate</div>
<div class="a" style="left:101.0px;top:1500.0px;width:3047.0px;height:58.0px;background:linear-gradient(to bottom, rgba(30,30,40,0), rgba(30,30,40,0.045));"></div>
<div class="t" style="left:1503.0px;top:1466px;font-size:23px;color:#666;word-spacing:-2.5px;transform:translate(-100%,0) rotate(-45deg);transform-origin:100% 0;">Nov 19 2025</div>
<div class="t" style="left:1598.4px;top:1466px;font-size:23px;color:#666;word-spacing:-2.5px;transform:translate(-100%,0) rotate(-45deg);transform-origin:100% 0;">Nov 21 2025</div>
<div class="t" style="left:1693.8px;top:1466px;font-size:23px;color:#666;word-spacing:-2.5px;transform:translate(-100%,0) rotate(-45deg);transform-origin:100% 0;">Nov 23 2025</div>
<div class="t" style="left:1789.3px;top:1466px;font-size:23px;color:#666;word-spacing:-2.5px;transform:translate(-100%,0) rotate(-45deg);transform-origin:100% 0;">Nov 25 2025</div>
<div class="t" style="left:1884.7px;top:1466px;font-size:23px;color:#666;word-spacing:-2.5px;transform:translate(-100%,0) rotate(-45deg);transform-origin:100% 0;">Nov 27 2025</div>
<div class="t" style="left:1980.1px;top:1466px;font-size:23px;color:#666;word-spacing:-2.5px;transform:translate(-100%,0) rotate(-45deg);transform-origin:100% 0;">Nov 29 2025</div>
<div class="t" style="left:2075.5px;top:1466px;font-size:23px;color:#666;word-spacing:-2.5px;transform:translate(-100%,0) rotate(-45deg);transform-origin:100% 0;">Dec 1 2025</div>
<div class="t" style="left:2170.9px;top:1466px;font-size:23px;color:#666;word-spacing:-2.5px;transform:translate(-100%,0) rotate(-45deg);transform-origin:100% 0;">Dec 3 2025</div>
<div class="t" style="left:2266.4px;top:1466px;font-size:23px;color:#666;word-spacing:-2.5px;transform:translate(-100%,0) rotate(-45deg);transform-origin:100% 0;">Dec 5 2025</div>
<div class="t" style="left:2361.8px;top:1466px;font-size:23px;color:#666;word-spacing:-2.5px;transform:translate(-100%,0) rotate(-45deg);transform-origin:100% 0;">Dec 7 2025</div>
<div class="t" style="left:2457.2px;top:1466px;font-size:23px;color:#666;word-spacing:-2.5px;transform:translate(-100%,0) rotate(-45deg);transform-origin:100% 0;">Dec 9 2025</div>
<div class="t" style="left:2552.6px;top:1466px;font-size:23px;color:#666;word-spacing:-2.5px;transform:translate(-100%,0) rotate(-45deg);transform-origin:100% 0;">Dec 11 2025</div>
<div class="t" style="left:2648.1px;top:1466px;font-size:23px;color:#666;word-spacing:-2.5px;transform:translate(-100%,0) rotate(-45deg);transform-origin:100% 0;">Dec 13 2025</div>
<div class="t" style="left:2743.5px;top:1466px;font-size:23px;color:#666;word-spacing:-2.5px;transform:translate(-100%,0) rotate(-45deg);transform-origin:100% 0;">Dec 15 2025</div>
<div class="t" style="left:2838.9px;top:1466px;font-size:23px;color:#666;word-spacing:-2.5px;transform:translate(-100%,0) rotate(-45deg);transform-origin:100% 0;">Dec 17 2025</div>
<svg class="a" style="left:0;top:0" width="3148" height="1558"><path d="M1502.8 734.7 L1550.5 588.0 L1598.2 699.2 L1645.9 716.8 L1693.6 657.3 L1741.3 699.2 L1789.0 720.0 L1836.7 744.0 L1884.4 768.5 L1932.1 755.2 L1979.8 713.3 L2027.5 703.2 L2075.2 654.7 L2122.9 769.3 L2170.6 692.1 L2218.2 716.7 L2265.9 713.2 L2313.6 681.9 L2361.3 706.5 L2409.0 727.4 L2456.7 651.1 L2504.4 744.8 L2552.1 626.4 L2599.8 737.3 L2647.5 769.0 L2695.2 734.1 L2742.9 685.4 L2790.6 737.3 L2838.3 876.1" fill="none" stroke="#3366cc" stroke-width="4" stroke-linejoin="round"/><g fill="#3366cc"><circle cx="1502.8" cy="734.7" r="3.6"/><circle cx="1550.5" cy="588.0" r="3.6"/><circle cx="1598.2" cy="699.2" r="3.6"/><circle cx="1645.9" cy="716.8" r="3.6"/><circle cx="1693.6" cy="657.3" r="3.6"/><circle cx="1741.3" cy="699.2" r="3.6"/><circle cx="1789.0" cy="720.0" r="3.6"/><circle cx="1836.7" cy="744.0" r="3.6"/><circle cx="1884.4" cy="768.5" r="3.6"/><circle cx="1932.1" cy="755.2" r="3.6"/><circle cx="1979.8" cy="713.3" r="3.6"/><circle cx="2027.5" cy="703.2" r="3.6"/><circle cx="2075.2" cy="654.7" r="3.6"/><circle cx="2122.9" cy="769.3" r="3.6"/><circle cx="2170.6" cy="692.1" r="3.6"/><circle cx="2218.2" cy="716.7" r="3.6"/><circle cx="2265.9" cy="713.2" r="3.6"/><circle cx="2313.6" cy="681.9" r="3.6"/><circle cx="2361.3" cy="706.5" r="3.6"/><circle cx="2409.0" cy="727.4" r="3.6"/><circle cx="2456.7" cy="651.1" r="3.6"/><circle cx="2504.4" cy="744.8" r="3.6"/><circle cx="2552.1" cy="626.4" r="3.6"/><circle cx="2599.8" cy="737.3" r="3.6"/><circle cx="2647.5" cy="769.0" r="3.6"/><circle cx="2695.2" cy="734.1" r="3.6"/><circle cx="2742.9" cy="685.4" r="3.6"/><circle cx="2790.6" cy="737.3" r="3.6"/><circle cx="2838.3" cy="876.1" r="3.6"/></g></svg>
</body></html>
